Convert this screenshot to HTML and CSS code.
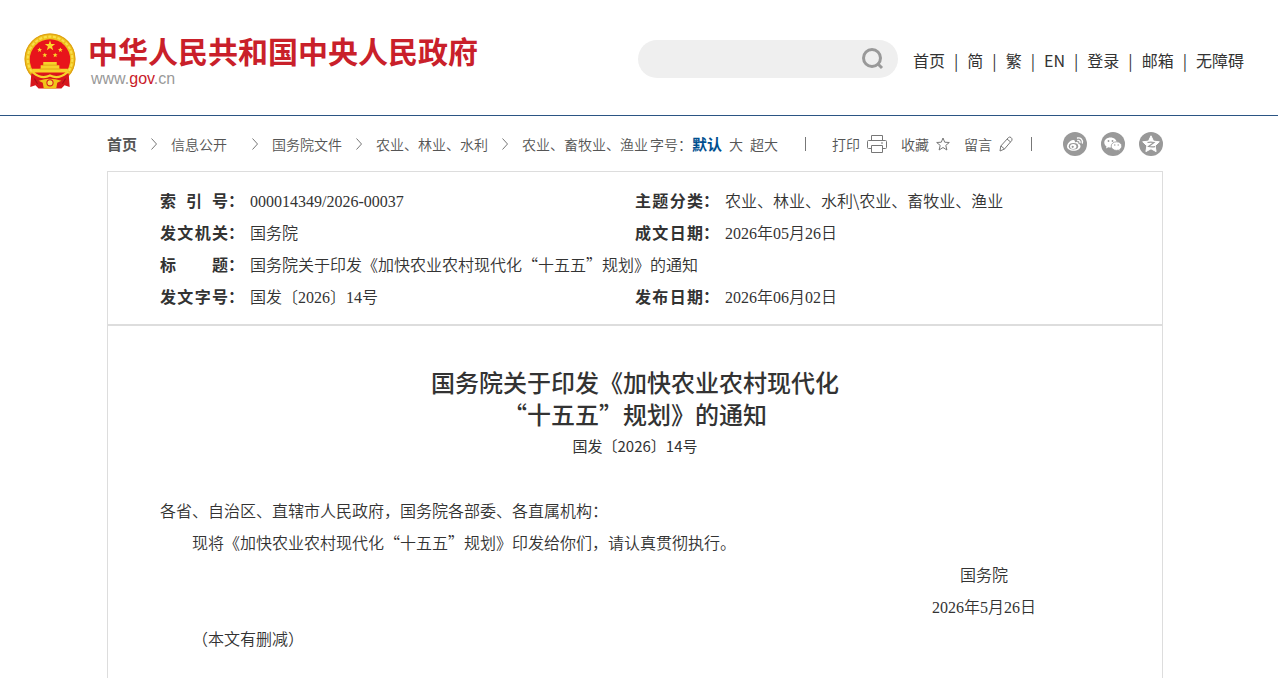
FILE: index.html
```html
<!DOCTYPE html>
<html lang="zh-CN">
<head>
    <meta charset="UTF-8">
    <meta name="viewport" content="width=device-width, initial-scale=1.0">
    <title>国务院关于印发《加快农业农村现代化“十五五”规划》的通知</title>
    <link rel="stylesheet" href="styles.css">
</head>
<body>

    <!-- Header -->
    <header class="header">
        <a class="logo" href="#">
            <svg class="emblem" viewBox="0 0 50 54" aria-hidden="true">
                <circle cx="25" cy="25" r="24.5" fill="#efc01c"/>
                <circle cx="25" cy="25" r="21.5" fill="none" stroke="#f9df4a" stroke-width="2" stroke-dasharray="3 1.500"/>
                <circle cx="25" cy="25" r="24" fill="none" stroke="#dd9f14"/>
                <circle cx="25" cy="25.500" r="19.500" fill="#e8141b"/>
                <path d="M25 7 L26.200 10.700 H30 L27 13 L28.100 16.700 L25 14.400 L21.900 16.700 L23 13 L20 10.700 H23.800 Z" fill="#fbd72b"/>
                <path id="star" d="M15 14 l.7 1.500 1.600.1-1.300 1.100 .5 1.600-1.500-.9-1.500.9.5-1.600-1.300-1.100 1.600-.1z" fill="#fbd72b"/>
                <use href="#star" x="20"/>
                <use href="#star" x="5" y="5"/>
                <use href="#star" x="15" y="5"/>
                <path d="M18.500 28 H31.500 V31 H34 V34.500 H42 L43 38 H7 L8 34.500 H16 V31 H18.500 Z" fill="#f7d22a"/>
                <path d="M18 31 H32 M15 34.700 H35" stroke="#dd9f14" stroke-width=".8"/>
                <path d="M7 39 L43 39 L44 52 L39 50.500 L36 53.500 H14 L11 50.500 L6 52 Z" fill="#d7161c"/>
                <path d="M9 38.500 Q17 45 25 41 Q33 45 41 38.500" fill="none" stroke="#f7d22a" stroke-width="2"/>
                <path d="M14 46 Q20 44 25 44 T36 46 L32 48 L31 53.500 H19 L18 48 Z" fill="#f0c419"/>
                <circle cx="25" cy="48" r="3" fill="#f9df4a" stroke="#d7161c"/>
                <path d="M10 44 L13 49 M40 44 L37 49" stroke="#a80f14"/>
            </svg>
            <span class="logo-text">
                <strong>中华人民共和国中央人民政府</strong>
                <span class="site">www.<em>gov</em>.cn</span>
            </span>
        </a>
        <form class="search">
            <input type="text" aria-label="搜索">
            <button type="button" aria-label="搜索">
                <svg viewBox="0 0 22 22" aria-hidden="true"><circle cx="10" cy="10" r="8.500"/><path d="M16 16 L20 20"/></svg>
            </button>
        </form>
        <nav class="top-nav">
            <a href="#">首页</a><i>|</i><a href="#">简</a><i>|</i><a href="#">繁</a><i>|</i><a href="#">EN</a><i>|</i><a href="#">登录</a><i>|</i><a href="#">邮箱</a><i>|</i><a href="#">无障碍</a>
        </nav>
    </header>

    <main class="page">
        <!-- Breadcrumb and tools -->
        <div class="toolbar">
            <nav class="crumbs">
                <a class="home" href="#">首页</a>
                <svg class="arrow" viewBox="0 0 6 12"><path d="M.5.5 L5.500 6 L.5 11.500"/></svg>
                <a class="wide" href="#">信息公开</a>
                <svg class="arrow" viewBox="0 0 6 12"><path d="M.5.5 L5.500 6 L.5 11.500"/></svg>
                <a href="#">国务院文件</a>
                <svg class="arrow" viewBox="0 0 6 12"><path d="M.5.5 L5.500 6 L.5 11.500"/></svg>
                <a href="#">农业、林业、水利</a>
                <svg class="arrow" viewBox="0 0 6 12"><path d="M.5.5 L5.500 6 L.5 11.500"/></svg>
                <a href="#">农业、畜牧业、渔业</a>
            </nav>
            <div class="tools">
                <div class="font-size">字号：<button class="active" type="button">默认</button><button type="button">大</button><button type="button">超大</button></div>
                <span class="bar"></span>
                <div class="actions">
                    <a href="#">打印
                        <svg class="print" viewBox="0 0 20 18"><path d="M4.500 5V.5h11V5M4.500 13.500h-3a1 1 0 0 1-1-1v-6a1 1 0 0 1 1-1h17a1 1 0 0 1 1 1v6a1 1 0 0 1-1 1h-3M4.500 10.500h11v7h-11zM14 8h2"/></svg>
                    </a>
                    <a href="#">收藏
                        <svg class="fav" viewBox="0 0 14 14"><path d="M7 1l1.700 4.200 4.600.3-3.500 2.900 1.100 4.600L7 10.500 3.100 13l1.100-4.600L.7 5.500l4.600-.3z"/></svg>
                    </a>
                    <a href="#">留言
                        <svg class="pen" viewBox="0 0 14 16"><path d="M1 15l.8-5L9.500 1.500q1.200-1 2.500 0t1 2.700L5.500 13zM8 3l3.600 3M2 10l3.500 3"/></svg>
                    </a>
                </div>
                <span class="bar"></span>
                <div class="share">
                    <a href="#" aria-label="微博">
                        <svg viewBox="0 0 24 24"><circle cx="12" cy="12" r="12" fill="#999"/><path d="M10 8c-3 .6-6 3.700-6 6.500 0 2.500 3 4.300 6.500 4.300 4 0 7-2.200 7-4.600 0-1.500-1-2.200-2.200-2.500.5-1.500-.8-2.300-3.400-1.300C12.300 8.700 11.500 7.700 10 8z" fill="#fff"/><ellipse cx="10.500" cy="14.300" rx="4.700" ry="3.300" fill="#999"/><ellipse cx="10.200" cy="14.500" rx="3.200" ry="2.500" fill="#fff"/><circle cx="9.700" cy="14.800" r="1.100" fill="#999"/><path d="M14.500 6c3-.6 5.500 1.800 4.800 5M14.800 8.500c1.500-.2 2.500.8 2.200 2.200" fill="none" stroke="#fff" stroke-width="1.300" stroke-linecap="round"/></svg>
                    </a>
                    <a href="#" aria-label="微信">
                        <svg viewBox="0 0 24 24"><circle cx="12" cy="12" r="12" fill="#999"/><path d="M9.500 5.500c-3.500 0-6.200 2.200-6.200 5 0 1.600.9 3 2.200 3.900L5 16.500l2.400-1.300c4.500 1 8.300-1.200 8.300-4.700 0-2.800-2.700-5-6.200-5z" fill="#fff"/><path d="M15.500 9.800c-3 0-5.300 1.900-5.300 4.300s2.300 4.300 5.300 4.300l1.700-.3 2 1.100-.5-1.800c1.300-.8 2.100-2 2.100-3.300 0-2.400-2.300-4.300-5.300-4.300z" fill="#fff" stroke="#999" stroke-width=".8"/><g fill="#999"><circle cx="7.500" cy="9" r=".9"/><circle cx="11.500" cy="9" r=".9"/><circle cx="13.800" cy="13" r=".7"/><circle cx="17.200" cy="13" r=".7"/></g></svg>
                    </a>
                    <a href="#" aria-label="QQ空间">
                        <svg viewBox="0 0 24 24"><circle cx="12" cy="12" r="12" fill="#999"/><path d="M12 3.800l2.500 5.300 5.800.7-4.200 4 1 5.800L12 16.800l-5.100 2.800 1-5.800-4.200-4 5.800-.7z" fill="#fff" stroke="#fff" stroke-linejoin="round"/><path d="M8.500 10.500q3.500-.7 6.500 0l-5.500 4q3 .8 6.500.2" fill="none" stroke="#999" stroke-width="1.200"/></svg>
                    </a>
                </div>
            </div>
        </div>

        <!-- Document info -->
        <section class="info">
            <table>
                <tr>
                    <th scope="row"><span class="label">索 引 号</span>：</th>
                    <td><span class="num">000014349/2026-00037</span></td>
                    <th scope="row"><span class="label">主题分类</span>：</th>
                    <td>农业、林业、水利\农业、畜牧业、渔业</td>
                </tr>
                <tr>
                    <th scope="row"><span class="label">发文机关</span>：</th>
                    <td>国务院</td>
                    <th scope="row"><span class="label">成文日期</span>：</th>
                    <td><span class="num">2026</span>年<span class="num">05</span>月<span class="num">26</span>日</td>
                </tr>
                <tr>
                    <th scope="row"><span class="label">标 题</span>：</th>
                    <td colspan="3">国务院关于印发《加快农业农村现代化“十五五”规划》的通知</td>
                </tr>
                <tr>
                    <th scope="row"><span class="label">发文字号</span>：</th>
                    <td>国发〔<span class="num">2026</span>〕<span class="num">14</span>号</td>
                    <th scope="row"><span class="label">发布日期</span>：</th>
                    <td><span class="num">2026</span>年<span class="num">06</span>月<span class="num">02</span>日</td>
                </tr>
            </table>
        </section>

        <!-- Document body -->
        <article class="article">
            <h1>国务院关于印发《加快农业农村现代化<br>“十五五”规划》的通知</h1>
            <p class="doc-no">国发〔2026〕14号</p>
            <p>各省、自治区、直辖市人民政府，国务院各部委、各直属机构：</p>
            <p class="indent">现将《加快农业农村现代化“十五五”规划》印发给你们，请认真贯彻执行。</p>
            <div class="sign">
                <p>国务院</p>
                <p><span class="num">2026</span>年<span class="num">5</span>月<span class="num">26</span>日</p>
            </div>
            <p class="indent">（本文有删减）</p>
        </article>
    </main>

</body>
</html>
```
FILE: styles.css
```css
/* Base styling */
* {
    box-sizing: border-box;
}

body {
    margin: 0;
    background-color: #fff;
    color: #333;
    font-family: "Noto Sans CJK SC", sans-serif;
    font-size: 16px;
    line-height: 32px;
}

a {
    color: inherit;
    text-decoration: none;
}

button {
    padding: 0;
    border: none;
    background: none;
    color: inherit;
    font: inherit;
    cursor: pointer;
}

p {
    margin: 0;
}

.num {
    font-family: "Liberation Serif", serif;
    line-height: 16px;
}

/* Header */
.header {
    display: flex;
    align-items: center;
    height: 116px;
    padding: 2px 34px 0 24px;
    border-bottom: 1px solid #2b5584;
}

.logo {
    display: flex;
    gap: 12px;
    margin-top: 6px;
}

.emblem {
    width: 52px;
    height: 56px;
}

.logo-text {
    display: flex;
    flex-direction: column;
}

.logo-text strong {
    color: #c9202a;
    font-size: 30px;
    line-height: 34px;
}

.site {
    padding-left: 3px;
    color: #999;
    font-family: "Liberation Sans", sans-serif;
    line-height: 24px;
}

.site em {
    color: #c9202a;
    font-style: normal;
}

.search {
    display: flex;
    align-items: center;
    width: 260px;
    height: 38px;
    margin-left: auto;
    padding: 0 14px 0 16px;
    border-radius: 19px;
    background-color: #efefef;
}

.search input {
    flex: 1;
    min-width: 0;
    border: none;
    outline: none;
    background: none;
    font: inherit;
}

.search svg {
    display: block;
    width: 22px;
    height: 22px;
    fill: none;
    stroke: #999;
    stroke-width: 3;
}

.top-nav {
    margin-left: 15px;
    padding-top: 2px;
    white-space: nowrap;
}

.top-nav i {
    margin: 0 9px;
    font-style: normal;
}

/* Page column */
.page {
    max-width: 1064px;
    margin: 0 auto;
    padding-right: 8px;
}

/* Breadcrumb and tools */
.toolbar {
    display: flex;
    justify-content: space-between;
    height: 55px;
    color: #555;
    font-size: 14px;
    font-weight: 350;
    line-height: 54px;
    white-space: nowrap;
}

.crumbs {
    display: flex;
    align-items: center;
    gap: 14px;
}

.crumbs .home {
    font-size: 15px;
    font-weight: 700;
}

.crumbs .wide {
    margin-right: 11px;
}

.arrow {
    width: 6px;
    height: 12px;
}

.arrow,
.actions svg {
    fill: none;
    stroke: #777;
}

.tools {
    display: flex;
    align-items: center;
}

.font-size {
    display: flex;
}

.font-size button {
    margin-right: 7px;
}

.font-size .active {
    color: #004f8f;
    font-size: 15px;
    font-weight: 700;
}

.bar {
    width: 1px;
    height: 14px;
    margin: 0 26px 0 20px;
    background-color: #777;
}

.actions {
    display: flex;
    gap: 14px;
}

.actions a {
    display: flex;
    align-items: center;
    gap: 7px;
}

.print {
    width: 20px;
    height: 18px;
}

.fav {
    width: 14px;
    height: 14px;
}

.pen {
    width: 14px;
    height: 16px;
}

.actions + .bar {
    margin: 0 31px 0 18px;
}

.share {
    display: flex;
    gap: 14px;
}

.share svg {
    display: block;
    width: 24px;
    height: 24px;
}

/* Document info */
.info {
    padding: 12px 52px;
    border: 1px solid #ddd;
}

.info table {
    width: 100%;
    border-collapse: collapse;
    table-layout: fixed;
}

.info th,
.info td {
    height: 32px;
    padding: 0;
    text-align: left;
    vertical-align: top;
    font-weight: 350;
}

.info th {
    width: 90px;
    font-weight: 700;
    white-space: nowrap;
}

.label {
    display: inline-block;
    width: 68px;
    vertical-align: top;
    text-align: justify;
    text-align-last: justify;
    white-space: normal;
}

/* Document body */
.article {
    padding: 40px 52px;
    border: 1px solid #ddd;
    font-weight: 350;
}

.article h1 {
    margin: 0;
    font-size: 24px;
    font-weight: 500;
    line-height: 32px;
    text-align: center;
}

.article .doc-no {
    margin-bottom: 32px;
    font-weight: 400;
    font-size: 15px;
    text-align: center;
}

.indent {
    text-indent: 2em;
}

.sign {
    width: 104px;
    margin: 0 74px 0 auto;
    text-align: center;
    white-space: nowrap;
}
```
